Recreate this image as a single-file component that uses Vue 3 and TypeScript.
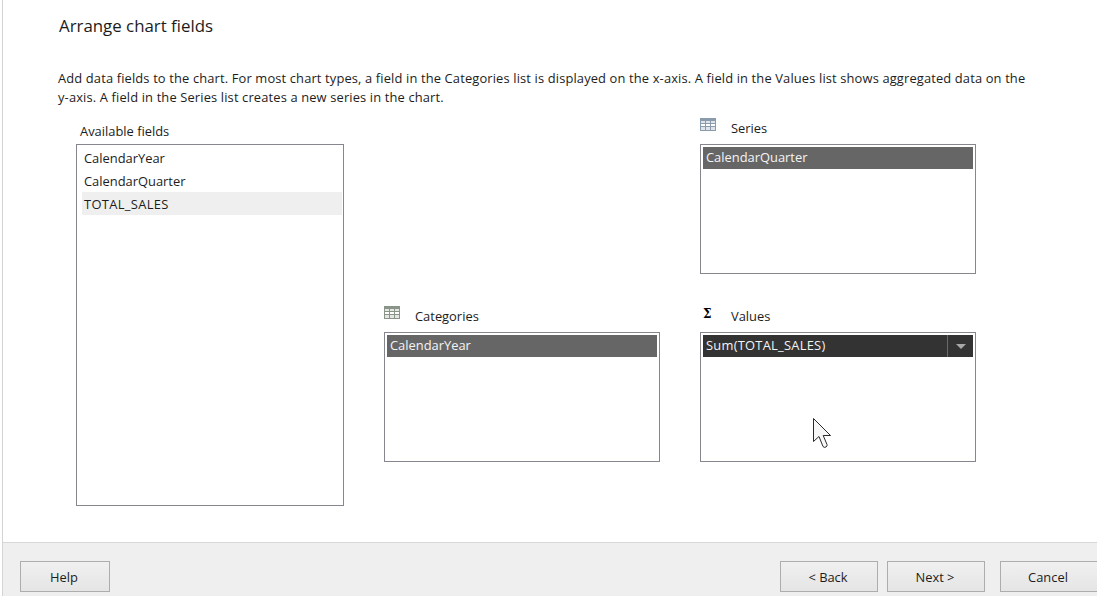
<template>
  <div class="wizard">
    <div class="content">
      <h1 class="title">Arrange chart fields</h1>
      <p class="intro">
        Add data fields to the chart. For most chart types, a field in the Categories list is displayed on the x-axis. A field in the Values list shows aggregated data on the y-axis. A field in the Series list creates a new series in the chart.
      </p>

      <div class="fields">
        <div class="zone available">
          <div class="zone-label plain">Available fields</div>
          <ul class="listbox">
            <li
              v-for="field in availableFields"
              :key="field"
              class="avail-item"
              :class="{ hover: field === 'TOTAL_SALES' }"
            >
              {{ field }}
            </li>
          </ul>
        </div>

        <div class="zone series">
          <div class="zone-label">
            <svg class="icon" width="16" height="13" viewBox="0 0 16 13">
              <rect x="0" y="0" width="16" height="13" fill="#8a9bad" />
              <rect x="1" y="3" width="4" height="2" fill="#dfe4ea" />
              <rect x="6" y="3" width="4" height="2" fill="#dfe4ea" />
              <rect x="11" y="3" width="4" height="2" fill="#dfe4ea" />
              <rect x="1" y="6" width="4" height="2" fill="#fff" />
              <rect x="6" y="6" width="4" height="2" fill="#fff" />
              <rect x="11" y="6" width="4" height="2" fill="#fff" />
              <rect x="1" y="9" width="4" height="3" fill="#dfe4ea" />
              <rect x="6" y="9" width="4" height="3" fill="#dfe4ea" />
              <rect x="11" y="9" width="4" height="3" fill="#dfe4ea" />
            </svg>
            <span>Series</span>
          </div>
          <div class="listbox drop">
            <div class="chip">CalendarQuarter</div>
          </div>
        </div>

        <div class="zone categories">
          <div class="zone-label">
            <svg class="icon" width="16" height="13" viewBox="0 0 16 13">
              <rect x="0" y="0" width="16" height="13" fill="#8a9488" />
              <rect x="1" y="3" width="4" height="2" fill="#e4e6e2" />
              <rect x="6" y="3" width="4" height="2" fill="#e4e6e2" />
              <rect x="11" y="3" width="4" height="2" fill="#e4e6e2" />
              <rect x="1" y="6" width="4" height="2" fill="#fff" />
              <rect x="6" y="6" width="4" height="2" fill="#fff" />
              <rect x="11" y="6" width="4" height="2" fill="#fff" />
              <rect x="1" y="9" width="4" height="3" fill="#e4e6e2" />
              <rect x="6" y="9" width="4" height="3" fill="#e4e6e2" />
              <rect x="11" y="9" width="4" height="3" fill="#e4e6e2" />
            </svg>
            <span>Categories</span>
          </div>
          <div class="listbox drop">
            <div class="chip">CalendarYear</div>
          </div>
        </div>

        <div class="zone values">
          <div class="zone-label">
            <span class="sigma">Σ</span>
            <span>Values</span>
          </div>
          <div class="listbox drop">
            <div class="chip dark">
              <span class="caps">Sum(TOTAL_SALES)</span>
              <span class="caret-cell"><i class="caret"></i></span>
            </div>
          </div>
        </div>
      </div>
    </div>

    <div class="footer">
      <button class="btn">Help</button>
      <div class="nav-buttons">
        <button class="btn nav">&lt; Back</button>
        <button class="btn nav">Next &gt;</button>
        <button class="btn nav cancel">Cancel</button>
      </div>
    </div>

    <svg class="cursor" width="20" height="32" viewBox="0 0 20 32">
      <path
        d="M1.5 1.5 V24.5 L7 19.5 L11 29.5 Q12 31 14 30 Q15.5 29 15 27.5 L11.2 18.5 H18.5 Z"
        fill="#f6f7f6"
        stroke="#2a2a2a"
        stroke-width="1"
      />
    </svg>
  </div>
</template>

<script setup lang="ts">
const availableFields: string[] = ['CalendarYear', 'CalendarQuarter', 'TOTAL_SALES'];
</script>

<style>
html, body {
  margin: 0;
  background: #fff;
  overflow: hidden;
}
</style>

<style scoped>
.wizard {
  position: relative;
  box-sizing: border-box;
  width: 1097px;
  height: 596px;
  overflow: hidden;
  display: flex;
  flex-direction: column;
  font-family: "Open Sans", "Noto Sans", sans-serif;
  font-size: 12.9px;
  color: #1c1c1c;
  background: #fff;
}

.content {
  flex: 1;
  margin-left: 2px;
  border-left: 1px solid #d4d4d4;
}

.title {
  margin: 14px 0 0 56px;
  font-size: 16.85px;
  font-weight: 400;
  line-height: 24px;
}

.intro {
  margin: 31px 66px 0 55px;
  line-height: 19px;
  letter-spacing: 0.14px;
}

.fields {
  display: grid;
  grid-template-columns: 268px 276px 276px;
  grid-template-rows: 130px 130px;
  column-gap: 40px;
  row-gap: 58px;
  margin: 37px 0 0 73px;
}

.zone {
  position: relative;
  display: flex;
  flex-direction: column;
}

.available {
  grid-column: 1;
  grid-row: 1 / span 2;
  height: 362px;
}

.series {
  grid-column: 3;
  grid-row: 1;
}

.categories {
  grid-column: 2;
  grid-row: 2;
}

.values {
  grid-column: 3;
  grid-row: 2;
}

.zone-label {
  position: absolute;
  left: 0;
  top: -28px;
  height: 24px;
  display: flex;
  align-items: center;
  gap: 15px;
}

.zone-label.plain {
  left: 4px;
  top: -25px;
}

.icon {
  margin-top: -7px;
}

.sigma {
  width: 16px;
  margin-top: -4px;
  padding-left: 3px;
  box-sizing: border-box;
  font-family: "DejaVu Serif", serif;
  font-weight: 700;
  font-size: 12px;
  color: #000;
}

.listbox {
  box-sizing: border-box;
  height: 100%;
  margin: 0;
  padding: 1px 1px 0 5px;
  list-style: none;
  border: 1px solid #86868e;
  background: #fff;
}

.drop {
  padding: 2px;
}

.avail-item {
  height: 23px;
  line-height: 24px;
  padding-left: 2px;
}

.avail-item.hover {
  background: #efefef;
  letter-spacing: 0.35px;
}

.chip {
  height: 22px;
  line-height: 21px;
  padding-left: 3px;
  color: #f4f4f4;
  background: #666;
  display: flex;
  justify-content: space-between;
}

.chip.dark {
  background: #333;
}

.caps {
  letter-spacing: 0.25px;
}

.caret-cell {
  width: 25px;
  height: 100%;
  border-left: 1px solid #6a6a6a;
  display: flex;
  align-items: center;
  justify-content: center;
}

.caret {
  display: block;
  width: 0;
  height: 0;
  border-left: 5px solid transparent;
  border-right: 5px solid transparent;
  border-top: 5px solid #a8a8a8;
}

.footer {
  box-sizing: border-box;
  height: 54px;
  margin-left: 2px;
  padding: 18px 0 0 17px;
  border-left: 1px solid #d4d4d4;
  border-top: 1px solid #d8d8d8;
  background: #efefef;
  display: flex;
  justify-content: space-between;
  align-items: flex-start;
}

.nav-buttons {
  display: flex;
  gap: 9px;
  margin-right: -1px;
}

.btn {
  box-sizing: border-box;
  width: 90px;
  height: 31px;
  padding: 0 2px 0 0;
  border: 1px solid #adadad;
  background: linear-gradient(#f0f0f0, #e5e5e5);
  font: inherit;
  color: #1c1c1c;
}

.btn.nav {
  width: 98px;
}

.btn.cancel {
  margin-left: 6px;
}

.cursor {
  position: absolute;
  left: 812px;
  top: 417px;
}
</style>
